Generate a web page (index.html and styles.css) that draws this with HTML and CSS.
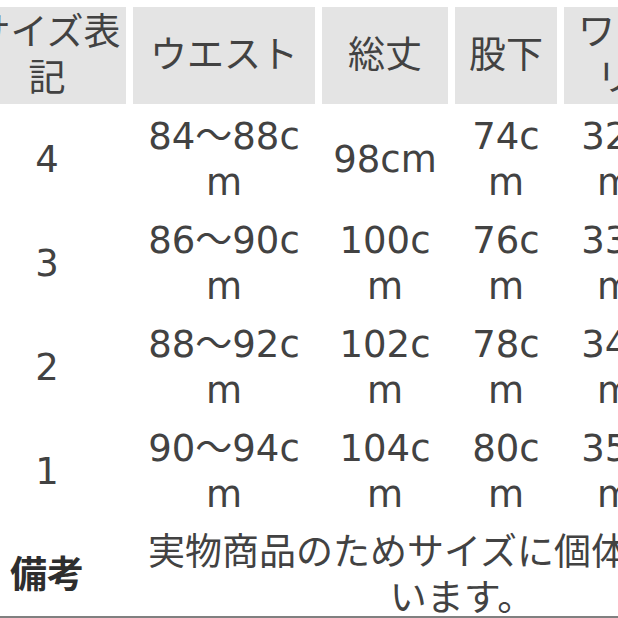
FILE: index.html
```html
<!DOCTYPE html>
<html lang="ja">
<head>
<meta charset="utf-8">
<link rel="stylesheet" href="styles.css">
</head>
<body>
<div class="frame">
  <table class="size-table">
    <colgroup>
      <col class="c1"><col class="c2"><col class="c3"><col class="c4"><col class="c5"><col class="c6">
    </colgroup>
    <thead>
      <tr>
        <th class="first">サイズ表記</th>
        <th>ウエスト</th>
        <th>総丈</th>
        <th>股下</th>
        <th>ワタリ</th>
        <th>裾幅</th>
      </tr>
    </thead>
    <tbody>
      <tr><td class="first">4</td><td>84〜88cm</td><td>98cm</td><td>74cm</td><td>32cm</td><td>22cm</td></tr>
      <tr><td class="first">3</td><td>86〜90cm</td><td>100cm</td><td>76cm</td><td>33cm</td><td>23cm</td></tr>
      <tr><td class="first">2</td><td>88〜92cm</td><td>102cm</td><td>78cm</td><td>34cm</td><td>24cm</td></tr>
      <tr><td class="first">1</td><td>90〜94cm</td><td>104cm</td><td>80cm</td><td>35cm</td><td>25cm</td></tr>
      <tr><td class="first note-label">備考</td><td colspan="5">実物商品のためサイズに個体差がございます。</td></tr>
    </tbody>
  </table>
</div>
<div class="bottom-bar"></div>
</body>
</html>
```
FILE: styles.css
```css
html, body {
  margin: 0;
  padding: 0;
  overflow: hidden;
  background: #ffffff;
}
body {
  width: 618px;
  height: 618px;
  position: relative;
  font-family: "DejaVu Sans", "Noto Sans CJK JP", sans-serif;
  color: #424242;
}
.frame {
  margin-left: -39px;
}
.size-table {
  table-layout: fixed;
  width: 837px;
  border-collapse: separate;
  border-spacing: 7px;
  font-size: 37px;
  line-height: 46px;
}
.c1 { width: 158px; }
.c2 { width: 182px; }
.c3 { width: 126px; }
.c4 { width: 102px; }
.c5 { width: 102px; }
.c6 { width: 118px; }
.size-table th,
.size-table td {
  padding: 2.5px 6px;
  text-align: center;
  vertical-align: middle;
  word-break: break-all;
  font-weight: 400;
  height: 92px;
}
.size-table .first {
  padding-left: 2px;
  padding-right: 2px;
}
.size-table th {
  background: #e4e4e4;
}
.size-table .note-label {
  font-weight: 700;
  color: #2e2e2e;
}
.bottom-bar {
  position: absolute;
  left: 0;
  right: 0;
  bottom: 0;
  height: 2px;
  background: #808080;
}
```
